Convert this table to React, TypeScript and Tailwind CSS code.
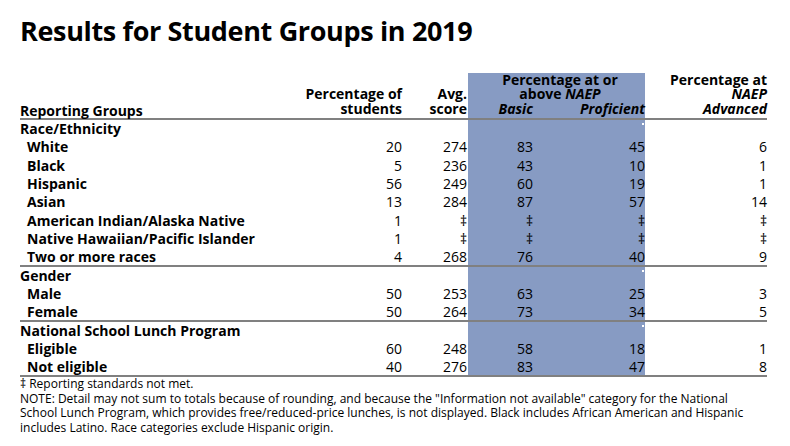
import React from "react"

type Row = {
  label: string
  students: string
  avg: string
  basic: string
  proficient: string
  advanced: string
}

type Group = {
  name: string
  rowH: string
  rows: Row[]
}

const groups: Group[] = [
  {
    name: "Race/Ethnicity",
    rowH: "h-[18.3px]",
    rows: [
      { label: "White", students: "20", avg: "274", basic: "83", proficient: "45", advanced: "6" },
      { label: "Black", students: "5", avg: "236", basic: "43", proficient: "10", advanced: "1" },
      { label: "Hispanic", students: "56", avg: "249", basic: "60", proficient: "19", advanced: "1" },
      { label: "Asian", students: "13", avg: "284", basic: "87", proficient: "57", advanced: "14" },
      { label: "American Indian/Alaska Native", students: "1", avg: "‡", basic: "‡", proficient: "‡", advanced: "‡" },
      { label: "Native Hawaiian/Pacific Islander", students: "1", avg: "‡", basic: "‡", proficient: "‡", advanced: "‡" },
      { label: "Two or more races", students: "4", avg: "268", basic: "76", proficient: "40", advanced: "9" },
    ],
  },
  {
    name: "Gender",
    rowH: "h-[18px]",
    rows: [
      { label: "Male", students: "50", avg: "253", basic: "63", proficient: "25", advanced: "3" },
      { label: "Female", students: "50", avg: "264", basic: "73", proficient: "34", advanced: "5" },
    ],
  },
  {
    name: "National School Lunch Program",
    rowH: "h-[18px]",
    rows: [
      { label: "Eligible", students: "60", avg: "248", basic: "58", proficient: "18", advanced: "1" },
      { label: "Not eligible", students: "40", avg: "276", basic: "83", proficient: "47", advanced: "8" },
    ],
  },
]

// column widths add up to 747px (x 20 -> 767)
const DataRow = ({ row, h }: { row: Row; h: string }) => (
  <div className={`flex ${h} items-center leading-[18px] text-[14px]`}>
    <div className="w-[282px] pl-[7px] font-bold whitespace-nowrap">{row.label}</div>
    <div className="w-[100px] text-right">{row.students}</div>
    <div className="w-[66px] pr-px text-right">{row.avg}</div>
    <div className="flex h-full w-[65px] items-center justify-end bg-[#879bc3]">{row.basic}</div>
    <div className="flex h-full w-[112px] items-center justify-end bg-[#879bc3]">{row.proficient}</div>
    <div className="w-[122px] text-right">{row.advanced}</div>
  </div>
)

const GroupHead = ({ name, h }: { name: string; h: string }) => (
  <div className={`flex ${h} items-center leading-[18px] text-[14px]`}>
    <div className="w-[282px] font-bold whitespace-nowrap">{name}</div>
    <div className="w-[100px]" />
    <div className="w-[66px]" />
    <div className="h-full w-[65px] bg-[#879bc3]" />
    <div className="relative h-full w-[112px] bg-[#879bc3]">
      <span className="absolute right-[1px] top-[3px] h-[2px] w-[2px] bg-white" />
    </div>
    <div className="w-[122px]" />
  </div>
)

export default function App() {
  return (
    <div
      className="h-[446px] w-[790px] overflow-hidden bg-white pl-[20px] text-black"
      style={{ fontFamily: '"Open Sans", "Noto Sans", sans-serif' }}
    >
      <h1 className="mt-[12px] text-[27px] font-bold leading-[38px] tracking-[-0.35px]">
        Results for Student Groups in 2019
      </h1>

      <div className="mt-[23px] w-[747px]">
        {/* header */}
        <div className="flex h-[47px] items-end border-b-2 border-[#808080] text-[14px] font-bold leading-[14.3px]">
          <div className="w-[282px]">Reporting Groups</div>
          <div className="w-[100px] pb-[2px] text-right">
            Percentage of
            <br />
            students
          </div>
          <div className="w-[66px] pb-[2px] pr-px text-right">
            Avg.
            <br />
            score
          </div>
          <div className="flex h-full w-[177px] flex-col justify-end bg-[#879bc3] pb-[2px]">
            <div className="pl-[7px] text-center">
              Percentage at or
              <br />
              above <i>NAEP</i>
            </div>
            <div className="flex italic">
              <div className="w-[65px] text-right">Basic</div>
              <div className="w-[112px] text-right">Proficient</div>
            </div>
          </div>
          <div className="w-[122px] pb-[2px] text-right">
            Percentage at
            <br />
            <i>NAEP</i>
            <br />
            <i>Advanced</i>
          </div>
        </div>

        {groups.map((g) => (
          <div key={g.name} className="border-b-2 border-[#808080]">
            <GroupHead name={g.name} h={g.rowH} />
            {g.rows.map((r, i) => (
              <DataRow key={r.label} row={r} h={i === g.rows.length - 1 ? "h-[17px]" : g.rowH} />
            ))}
          </div>
        ))}
      </div>

      <div className="text-[12px] leading-[14.5px]">
        <p>‡ Reporting standards not met.</p>
        <p className="whitespace-nowrap">
          NOTE: Detail may not sum to totals because of rounding, and because the "Information not available" category for the National
          <br />
          School Lunch Program, which provides free/reduced-price lunches, is not displayed. Black includes African American and Hispanic
          <br />
          includes Latino. Race categories exclude Hispanic origin.
        </p>
      </div>
    </div>
  )
}
